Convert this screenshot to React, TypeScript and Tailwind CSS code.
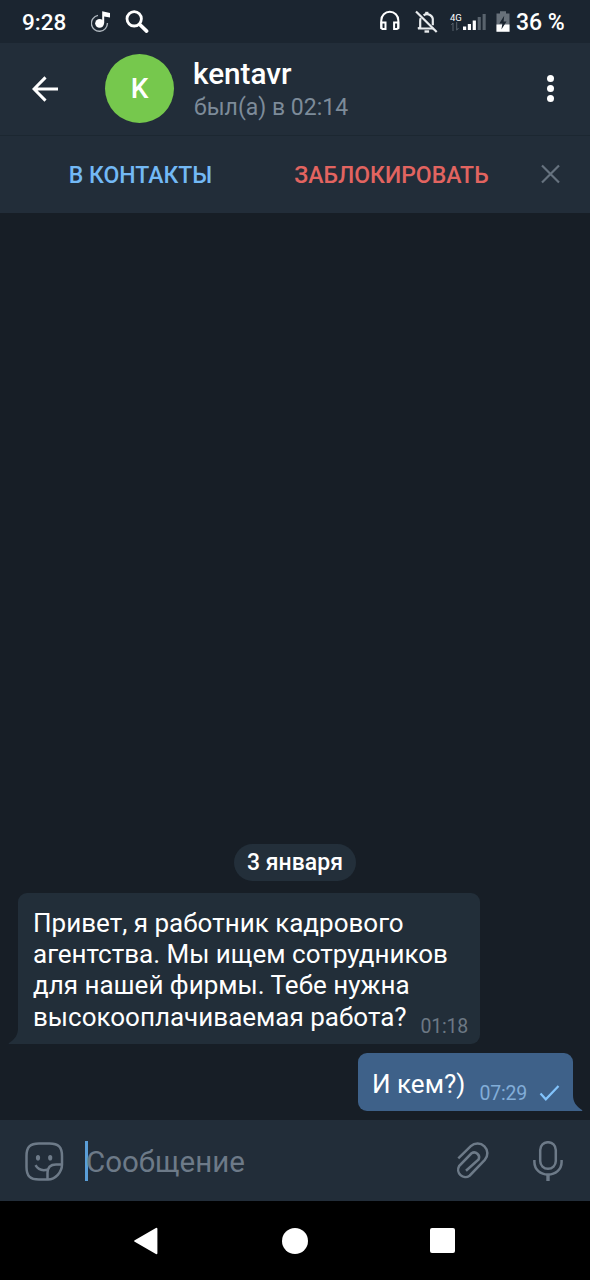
import type { ReactNode } from 'react'

interface Message {
  id: number
  lines: string[]
  time: string
  own: boolean
}

const messages: Message[] = [
  {
    id: 1,
    lines: [
      'Привет, я работник кадрового',
      'агентства. Мы ищем сотрудников',
      'для нашей фирмы. Тебе нужна',
      'высокооплачиваемая работа?'
    ],
    time: '01:18',
    own: false
  },
  { id: 2, lines: ['И кем?)'], time: '07:29', own: true }
]

function StatusBar() {
  return (
    <div className="flex h-[43px] shrink-0 items-center bg-[#1b2530] pr-[25px] pl-[22px] text-white">
      <span className="w-[69px] pt-[2px] text-[22.5px] font-medium">9:28</span>
      {/* Music note */}
      <svg className="h-6 w-5 shrink-0" viewBox="0 0 20 24" fill="none">
        <path d="M7 5.4A8 8 0 1 0 16.4 13" stroke="#aeb6bd" strokeWidth="1.4" />
        <circle cx="8.6" cy="13.3" r="4.4" fill="#fff" />
        <path d="M11.2 13.3V1.2L19 3v4.6l-5.8-1.1v6.8z" fill="#fff" />
      </svg>
      <svg className="ml-[14px] h-6 w-6 shrink-0" viewBox="0 0 24 24" fill="none" stroke="#fff">
        <circle cx="9.2" cy="8.8" r="7.2" strokeWidth="2.8" />
        <path d="M14.8 14.5l6.8 6.6" strokeWidth="3.6" strokeLinecap="round" />
      </svg>
      <div className="flex-1" />
      {/* Headphones */}
      <svg className="h-6 w-[22px] shrink-0" viewBox="0 0 22 24" fill="none" stroke="#fff" strokeWidth="2">
        <path d="M2.3 19V10.3a8.5 8.5 0 0 1 17 0V19" />
        <path d="M2.3 12.4h4.2V19H4.2a1.9 1.9 0 0 1-1.9-1.9zM19.3 12.4h-4.2V19h2.3a1.9 1.9 0 0 0 1.9-1.9z" />
      </svg>
      {/* Muted bell */}
      <svg className="ml-[14px] h-6 w-6 shrink-0" viewBox="0 0 24 24" fill="none" stroke="#e8ebed" strokeWidth="2.2">
        <path d="M5.7 8.2a7 7 0 0 0-.5 3v6.4L3 18.5h15.4M8.6 5.4a5.8 5.8 0 0 1 9.2 5.4v4.4" />
        <path d="M11.8 4.4V1.8" strokeWidth="3.2" />
        <path d="M9.5 21.5h4.6" strokeWidth="2.4" />
        <path d="M1 1.5l20.7 20.5" />
      </svg>
      {/* Mobile network */}
      <div className="ml-[11px] flex h-6 w-4 shrink-0 flex-col">
        <span className="mt-[2px] block h-[9px] text-[9.5px] leading-[11px]">4G</span>
        <svg className="mt-px ml-px h-[9px] w-2" viewBox="0 0 8 9" fill="none" stroke="#59636d">
          <path d="M2 9V1L.3 3M5.7 0v8.2L7.5 6" />
        </svg>
      </div>
      <svg className="-ml-[3px] h-6 w-6 shrink-0" viewBox="0 0 24 24">
        <path d="M0 16.5h3.2V20H0zM4.8 14H8v6H4.8zM9.7 10.5h3.2V20H9.7z" fill="#fff" />
        <path d="M14.7 7h3.1v13h-3.1zM19.6 4h3.1v16h-3.1z" fill="#59636d" />
      </svg>
      {/* Battery */}
      <svg className="ml-[9px] h-6 w-[14px] shrink-0" viewBox="0 0 14 24">
        <path d="M4 1.2h6v2.2h3.5v18.3H.5V3.4H4z" fill="#68717a" />
        <path d="M.5 14.5h13v7.2H.5z" fill="#fff" />
        <path d="M8.2 5.7L3.3 13.4h3.1l-1 6.2 5.1-8.2H7.6z" fill="#1b2530" />
      </svg>
      <span className="ml-[6px] w-[49px] pt-[3px] text-[23px] font-medium whitespace-nowrap">36 %</span>
    </div>
  )
}

function ChatHeader() {
  return (
    <header className="flex h-[92px] shrink-0 items-center pr-[30px] pb-[2px] pl-8">
      <svg className="mt-px h-[26px] w-[27px] shrink-0" viewBox="0 0 27 26" fill="none" stroke="#fff" strokeWidth="3">
        <path d="M26 13H2M13.5 1.4L2 13l11.5 11.6" />
      </svg>
      <div className="ml-[46px] flex size-[69px] items-center justify-center rounded-full bg-[#76c84d] pt-px text-[28px] font-medium text-white">
        K
      </div>
      <div className="ml-[19px] flex flex-1 flex-col pt-[4px]">
        <span className="text-[29.7px] leading-8 font-medium text-white">kentavr</span>
        <span className="mt-[2px] ml-px text-[23px] leading-[31px] text-[#7d8b99]">был(а) в 02:14</span>
      </div>
      <div className="flex w-5 flex-col items-center gap-[3px]">
        <i className="size-[7px] rounded-full bg-white" />
        <i className="size-[7px] rounded-full bg-white" />
        <i className="size-[7px] rounded-full bg-white" />
      </div>
    </header>
  )
}

function ContactActions() {
  return (
    <div className="flex h-[78px] shrink-0 items-center border-t border-[#1c2731] pr-[29px] pb-px text-[23px] font-medium whitespace-nowrap">
      <button className="w-[281px] pt-[4px] text-center text-[#73b9f5]">В КОНТАКТЫ</button>
      <button className="flex-1 pt-[4px] pr-[39px] text-center text-[#e26460]">ЗАБЛОКИРОВАТЬ</button>
      <svg className="size-5" viewBox="0 0 20 20" fill="none" stroke="#66727f" strokeWidth="2.2">
        <path d="M1 1.5l17 17M18 1.5l-17 17" />
      </svg>
    </div>
  )
}

function Bubble({ own, children }: { own: boolean; children: ReactNode }) {
  if (own) {
    return (
      <div className="relative mr-[17px] flex h-[58px] w-[215px] self-end rounded-[9px] rounded-br-none bg-[#3e6189] pt-4 pl-[14px]">
        {children}
        <svg className="absolute -right-[10px] bottom-0 h-4 w-[11px]" viewBox="0 0 11 16" fill="#3e6189">
          <path d="M0 0h1c0 7 3 11 9 15 .6.5.3 1-.4 1H0z" />
        </svg>
      </div>
    )
  }
  return (
    <div className="relative ml-[18px] h-[151px] w-[462px] rounded-[9px] rounded-bl-none bg-[#222e39] pt-[15px] pl-[15px]">
      {children}
      <svg className="absolute bottom-0 -left-[10px] h-4 w-[11px]" viewBox="0 0 11 16" fill="#222e39">
        <path d="M11 0h-1c0 7-3 11-9 15-.6.5-.3 1 .4 1H11z" />
      </svg>
    </div>
  )
}

function MessageRow({ message }: { message: Message }) {
  return (
    <Bubble own={message.own}>
      <div className="text-[26px] leading-[31.2px] whitespace-nowrap text-white">
        {message.lines.map((line) => (
          <div key={line}>{line}</div>
        ))}
      </div>
      {message.own ? (
        <div className="absolute right-[13px] bottom-[5px] flex items-center text-[19.5px] leading-6 tracking-[-0.2px] text-[#82add8]">
          {message.time}
          <svg className="mb-[2px] ml-3 h-5 w-[21px]" viewBox="0 0 21 20" fill="none" stroke="#82c3fb" strokeWidth="2.2">
            <path d="M1.5 10.5l5.3 5.8L19.5 3" />
          </svg>
        </div>
      ) : (
        <div className="absolute right-3 bottom-[5px] text-[19.5px] leading-6 tracking-[-0.2px] text-[#6c7884]">
          {message.time}
        </div>
      )}
    </Bubble>
  )
}

function Composer() {
  return (
    <div className="flex h-[81px] shrink-0 items-center bg-[#222d39] pr-[27px] pl-[25px]">
      {/* Sticker */}
      <svg className="mt-[2px] h-[39px] w-[39px] shrink-0" viewBox="0 0 39 39" fill="none" stroke="#6d7a88" strokeWidth="2.5">
        <path d="M23 37.5H14C5 37.5 1.5 34 1.5 25V14C1.5 5 5 1.5 14 1.5h10.5C33.5 1.5 37 5 37 14v8.5C37 30 30.5 37.5 23 37.5z" />
        <path d="M22.5 37V31c0-6 3-8.5 8.5-8.5h6M10.5 23.2c2.3 3.9 6.8 5.9 12.3 4.3" />
        <ellipse cx="13" cy="15.7" rx="2.1" ry="2.8" fill="#6d7a88" stroke="none" />
        <ellipse cx="25.2" cy="15.7" rx="2.1" ry="2.8" fill="#6d7a88" stroke="none" />
      </svg>
      <div className="ml-[21px] h-10 w-[3px] shrink-0 bg-[#5a9ed8]" />
      <span className="-ml-[2px] flex-1 pt-[3px] text-[29.5px] leading-10 text-[#6d7a88]">Сообщение</span>
      {/* Attachment */}
      <svg className="h-[39px] w-[34px] shrink-0" viewBox="0 0 34 39" fill="none" stroke="#6d7a88" strokeWidth="2.5">
        <path d="M2.3 17.3L14.8 5.2A9.8 9.8 0 0 1 28.8 18.9L13.6 34.7A7.3 7.3 0 0 1 3.1 25.1L15.5 12.3A4.9 4.9 0 0 1 22.6 18.5L10 29.8" />
      </svg>
      {/* Microphone */}
      <svg className="ml-[43px] h-10 w-[30px] shrink-0" viewBox="0 0 30 40" fill="none" stroke="#6d7a88" strokeWidth="2.5">
        <rect x="7.2" y="1.2" width="15.6" height="26.6" rx="7.8" />
        <path d="M1.4 19v2c0 7.5 6.1 12.5 13.6 12.5s13.6-5 13.6-12.5v-2" />
        <path d="M15 34v6" strokeWidth="3.4" />
      </svg>
    </div>
  )
}

function NavigationBar() {
  return (
    <nav className="flex h-[79px] shrink-0 items-center justify-between bg-black pr-[135px] pl-[134px]">
      <svg className="h-7 w-6" viewBox="0 0 24 28" fill="#fff" stroke="#fff" strokeWidth="2" strokeLinejoin="round">
        <path d="M1.2 14L22.4 1.8v24.4z" />
      </svg>
      <div className="ml-px size-[26px] rounded-full bg-white" />
      <div className="size-[25px] rounded-[2px] bg-white" />
    </nav>
  )
}

export default function App() {
  return (
    <div className="flex h-[1280px] w-[590px] flex-col overflow-hidden bg-[#222d39] font-[Roboto,sans-serif]">
      <StatusBar />
      <ChatHeader />
      <ContactActions />
      <main className="flex flex-1 flex-col justify-end bg-[#171e26] pb-[9px]">
        <div className="mb-3 flex h-[37px] w-[122px] items-center justify-center self-center rounded-full bg-[#232f3a] pt-[2px] text-[23px] font-medium text-white">
          3 января
        </div>
        <div className="flex flex-col gap-[9px]">
          {messages.map((message) => (
            <MessageRow key={message.id} message={message} />
          ))}
        </div>
      </main>
      <Composer />
      <NavigationBar />
    </div>
  )
}
